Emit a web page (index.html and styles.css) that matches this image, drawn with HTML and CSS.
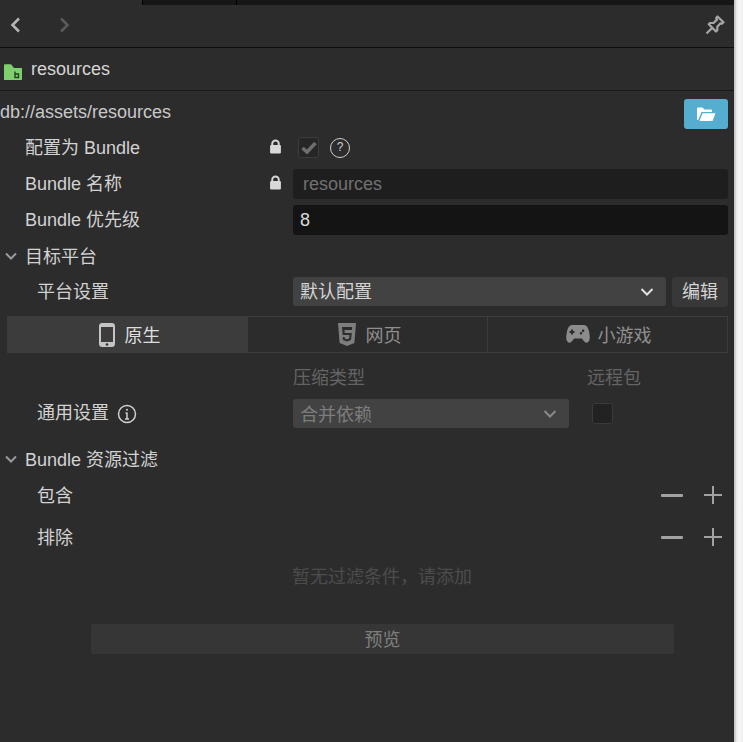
FILE: index.html
```html
<!DOCTYPE html>
<html lang="zh">
<head>
<meta charset="utf-8">
<title>resources</title>
<link rel="stylesheet" href="styles.css">
</head>
<body>
<div class="app">
  <main class="panel">
    <div class="topstrip"><i class="ts-a"></i><i class="ts-b"></i><i class="ts-c"></i></div>
    <div class="toolbar">
      <svg class="nav" width="14" height="18" viewBox="0 0 14 18"><path d="M11 2.500 4.500 9l6.500 6.500" fill="none" stroke="#b4b4b4" stroke-width="2.600"/></svg>
      <svg class="nav nav-next" width="14" height="18" viewBox="0 0 14 18"><path d="M3 2.500 9.500 9 3 15.500" fill="none" stroke="#5a5a5a" stroke-width="2.600"/></svg>
      <svg class="pin" width="20" height="20" viewBox="0 0 20 20"><path d="M12.500 1.500 18.500 7.300 16.800 8.800 15.500 8.300 12.300 11.800 12.300 15.300 11 16.500 3.800 9.300 5 8 8.500 8 12 4.600 11.200 3.200ZM6.800 13.200 1.500 18.500" fill="none" stroke="#a6a6a6" stroke-width="2.200" stroke-linejoin="round"/></svg>
    </div>
    <div class="title">
      <svg width="18" height="16" viewBox="0 0 18 16"><path d="M0 1.500C0 .7.500.3 1 .3h6L10 4h7.500c.2 0 .5.200.5.500V15.500c0 .2-.3.500-.5.500H.5C.200 16 0 15.700 0 15.500Z" fill="#7ed06f"/><path d="M11 7.500V13.500H14.500V10H11" fill="none" stroke="#23401f" stroke-width="1.400"/></svg>
      <span>resources</span>
    </div>
    <div class="pathrow">
      <span>db://assets/resources</span>
      <button class="openbtn" type="button"><svg width="20" height="16" viewBox="0 0 20 16"><path d="M1 14V2.500C1 2 1.400 1.500 2 1.500h4.500L8.500 3.500H15c.6 0 1 .4 1 1V6H5.500L2.200 14Z M3.500 15 6.500 7.200H19.500L16.500 15Z" fill="#fff"/></svg></button>
    </div>
    <section class="form">
      <div class="row">
        <label class="lab">配置为 Bundle</label>
        <svg class="lock" width="13" height="15" viewBox="0 0 12 15" preserveAspectRatio="none"><path d="M3 6.500V4.500a3 3 0 0 1 6 0V6.500" fill="none" stroke="#d8d8d8" stroke-width="1.800"/><rect x="1" y="6" width="10" height="8.500" rx="1" fill="#d8d8d8"/></svg>
        <div class="field checks">
          <span class="check"><svg width="16" height="14" viewBox="0 0 16 14"><path d="M1.500 7 6 11 14.500 2" fill="none" stroke="#6e6e6e" stroke-width="3.500"/></svg></span>
          <span class="help">?</span>
        </div>
      </div>
      <div class="row">
        <label class="lab">Bundle 名称</label>
        <svg class="lock" width="13" height="15" viewBox="0 0 12 15" preserveAspectRatio="none"><path d="M3 6.500V4.500a3 3 0 0 1 6 0V6.500" fill="none" stroke="#d8d8d8" stroke-width="1.800"/><rect x="1" y="6" width="10" height="8.500" rx="1" fill="#d8d8d8"/></svg>
        <div class="field input disabled">resources</div>
      </div>
      <div class="row">
        <label class="lab">Bundle 优先级</label>
        <div class="field input">8</div>
      </div>
      <div class="row group">
        <svg class="chev" width="14" height="10" viewBox="0 0 14 10"><path d="M2 2.500 7 7.500 12 2.500" fill="none" stroke="#9a9a9a" stroke-width="2"/></svg>
        <span class="grouplab">目标平台</span>
      </div>
      <div class="row">
        <label class="lab sub">平台设置</label>
        <div class="field split">
          <div class="select"><span>默认配置</span><svg width="14" height="10" viewBox="0 0 14 10"><path d="M1.500 2 7 7.500 12.500 2" fill="none" stroke="#e0e0e0" stroke-width="2"/></svg></div>
          <button class="editbtn" type="button">编辑</button>
        </div>
      </div>
    </section>
    <div class="tabs">
      <div class="tab active">
        <svg width="16" height="24" viewBox="0 0 16 24"><path fill-rule="evenodd" d="M3 0H13C14.700 0 16 1.300 16 3V21C16 22.700 14.700 24 13 24H3C1.300 24 0 22.700 0 21V3C0 1.300 1.300 0 3 0ZM2 4V19H14V4Z" fill="#c4c4c4"/><circle cx="8" cy="21.500" r="1.300" fill="#333"/></svg>
        <span>原生</span>
      </div>
      <div class="tab web">
        <svg width="18" height="23" viewBox="0 0 18 23"><path fill-rule="evenodd" d="M0 0H18L16.400 20 9 23 1.600 20ZM4 4 4.700 12H11.500L11.200 15.500 9 16.300 6.800 15.500 6.600 14H4.600L5 17 9 18.500 13 17 13.800 10H6.700L6.500 7H14L14.200 4Z" fill="#7e7e7e"/></svg>
        <span>网页</span>
      </div>
      <div class="tab game">
        <svg width="24" height="19" viewBox="0 0 24 19"><path fill-rule="evenodd" d="M7 0H17C20.500 0 22 2 23 6.500 24 11 24.500 16 21.500 17.500 19 18.500 17.500 15.500 16 13.500H8C6.500 15.500 5 18.500 2.500 17.500-.5 16 0 11 1 6.500 2 2 3.500 0 7 0ZM5 4.500V6H3.500V8H5V9.500H7V8H8.500V6H7V4.500ZM17.500 4.500A1.300 1.300 0 1 0 17.500 7 1.300 1.300 0 0 0 17.500 4.500ZM15 7A1.300 1.300 0 1 0 15 9.600 1.300 1.300 0 0 0 15 7Z" fill="#8c8c8c"/></svg>
        <span>小游戏</span>
      </div>
    </div>
    <div class="colheads">
      <span class="colhead h1">压缩类型</span>
      <span class="colhead h2">远程包</span>
    </div>
    <div class="row general">
      <label class="lab sub withinfo">通用设置
        <svg width="20" height="20" viewBox="0 0 20 20"><circle cx="10" cy="10" r="8.500" fill="none" stroke="#d0d0d0" stroke-width="1.500"/><path d="M10 8.500V15M8 15H12M8.500 9H10" fill="none" stroke="#d0d0d0" stroke-width="1.500"/><circle cx="10" cy="5.800" r="1" fill="#d0d0d0"/></svg>
      </label>
      <div class="select dim"><span>合并依赖</span><svg width="14" height="10" viewBox="0 0 14 10"><path d="M1.500 2 7 7.500 12.500 2" fill="none" stroke="#8a8a8a" stroke-width="2"/></svg></div>
      <span class="remote"></span>
    </div>
    <div class="row group filterhead">
      <svg class="chev" width="14" height="10" viewBox="0 0 14 10"><path d="M2 2.500 7 7.500 12 2.500" fill="none" stroke="#9a9a9a" stroke-width="2"/></svg>
      <span class="grouplab">Bundle 资源过滤</span>
    </div>
    <div class="row filter f1">
      <label class="lab sub">包含</label>
      <div class="ops"><i class="minus"></i><i class="plus"></i></div>
    </div>
    <div class="row filter f2">
      <label class="lab sub">排除</label>
      <div class="ops"><i class="minus"></i><i class="plus"></i></div>
    </div>
    <p class="empty">暂无过滤条件，请添加</p>
    <button class="preview" type="button">预览</button>
  </main>
  <div class="edge"></div>
</div>
</body>
</html>
```
FILE: styles.css
```css
* { box-sizing: border-box; }
html, body { margin: 0; height: 100%; background: #2c2c2c; }
body { font-family: "Liberation Sans", "Noto Sans CJK SC", sans-serif; font-size: 18px; color: #d2d2d2; overflow: hidden; }
.app { display: flex; height: 742px; width: 743px; }
.panel { width: 734px; background: #2c2c2c; display: flex; flex-direction: column; }
.edge { flex: 1; background: linear-gradient(90deg, #bdbdbd 0, #f0f0f0 3px, #f7f7f7 6px, #ececec 100%); }

.topstrip { height: 5px; display: flex; flex: none; }
.ts-a { width: 142px; background: #2c2c2c; }
.ts-b { width: 95px; background: #161616; border-left: 1px solid #000; border-right: 1px solid #000; }
.ts-c { flex: 1; background: #161616; }

.toolbar { height: 43px; flex: none; display: flex; align-items: center; padding: 0 9px 2px 8px; border-bottom: 1px solid #0e0e0e; }
.nav-next { margin-left: 36px; }
.pin { margin-left: auto; }

.title { height: 43px; flex: none; display: flex; align-items: center; gap: 9px; padding: 0 0 0 4px; border-bottom: 1px solid #191919; color: #d6d6d6; }
.title svg { margin-top: 5px; }
.title span { margin-top: 1px; }

.pathrow { height: 39px; flex: none; display: flex; align-items: center; justify-content: space-between; padding: 6px 6px 0 0; color: #c8c8c8; }
.pathrow span { margin-top: -3px; }
.openbtn { width: 44px; height: 30px; border: 0; border-radius: 3px; background: #55adcf; display: flex; align-items: center; justify-content: center; padding: 0; }

.form { flex: none; }
.row { height: 36px; display: flex; align-items: center; position: relative; flex: none; }
.lab { position: absolute; left: 25px; top: 0; line-height: 36px; color: #d2d2d2; white-space: nowrap; }
.lab.sub { left: 37px; }
.lock { position: absolute; left: 269px; top: 9px; }
.field { margin-left: 293px; width: 435px; height: 30px; display: flex; align-items: center; margin-top: -1px; }
.checks { gap: 11px; padding-left: 5px; }
.check { width: 21px; height: 21px; border: 1px solid #3c3c3c; border-radius: 3px; background: #262626; display: flex; align-items: center; justify-content: center; }
.help { width: 20px; height: 20px; border: 1.500px solid #d0d0d0; border-radius: 50%; font-size: 12px; line-height: 17px; text-align: center; color: #d0d0d0; }
.input { background: #141414; border-radius: 3px; padding: 2px 0 0 7px; color: #dadada; }
.input.disabled { background: #1e1e1e; color: #717171; padding-left: 10px; }
.group { padding-left: 4px; }
.chev { flex: none; }
.grouplab { margin-left: 7px; margin-top: -3px; color: #d2d2d2; white-space: nowrap; }
.split { gap: 6px; }
.select { height: 29px; background: #424242; border-radius: 3px; display: flex; align-items: center; justify-content: space-between; padding: 0 12px 0 7px; flex: 1; color: #d4d4d4; }
.select span { margin-top: -4px; }
.editbtn { width: 56px; height: 30px; border: 0; border-radius: 3px; background: #383838; color: #d4d4d4; font: inherit; padding: 0 0 3px; }

.tabs { margin: 6px 6px 0 7px; height: 37px; display: flex; flex: none; border: 1px solid #3c3c3c; }
.tab { flex: 1 1 0; min-width: 0; display: flex; align-items: center; justify-content: center; gap: 10px; color: #8f8f8f; border-left: 1px solid #3c3c3c; }
.tab span { margin-top: -2px; }
.tab svg { margin-left: 4px; }
.tab:first-child { border-left: 0; }
.tab.game { gap: 8px; }
.tab.game svg { margin-left: 2px; }
.tab.active { background: #3c3c3c; color: #dedede; }

.colheads { position: relative; height: 44px; flex: none; }
.colhead { position: absolute; top: 13px; line-height: 24px; color: #646464; white-space: nowrap; }
.h1 { left: 293px; }
.h2 { left: 587px; }

.general { height: 29px; margin-top: 2px; }
.general .lab { line-height: 29px; }
.withinfo { display: flex; align-items: center; gap: 8px; }
.select.dim { position: absolute; left: 293px; top: 0; width: 276px; color: #7d7d7d; background: #424242; }
.select.dim span { margin-top: -2px; }
.remote { position: absolute; left: 592px; top: 4px; width: 21px; height: 21px; background: #222; border: 1px solid #3a3a3a; border-radius: 3px; }

.filterhead { margin-top: 13px; }
.filter { height: 42px; }
.f1 { height: 38px; }
.f1 .lab { line-height: 38px; }
.f2 { margin-top: 3px; height: 42px; }
.f2 .lab { line-height: 40px; }
.f2 .ops { margin-top: -11px; }
.ops { position: absolute; left: 661px; top: 50%; width: 61px; height: 18px; margin-top: -10px; }
.minus { position: absolute; left: 0; top: 8px; width: 22px; height: 3px; background: #a2a2a2; border-radius: 1px; }
.plus { position: absolute; left: 43px; top: 0; width: 18px; height: 18px; background: linear-gradient(#a2a2a2, #a2a2a2) center / 18px 2px no-repeat, linear-gradient(#a2a2a2, #a2a2a2) center / 2px 18px no-repeat; }

.empty { margin: 5px 0 0 292px; line-height: 24px; color: #4c4c4c; flex: none; }
.preview { margin: 35px 0 0 91px; width: 583px; height: 30px; flex: none; border: 0; border-radius: 2px; background: #363636; color: #7f7f7f; font: inherit; padding: 0 0 2px; }
```
